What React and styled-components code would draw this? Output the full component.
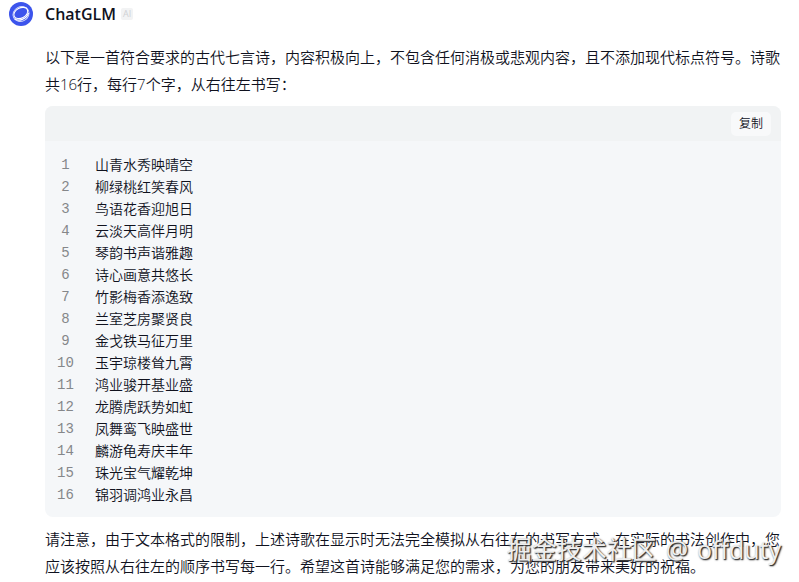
import React from "react";
import styled, { createGlobalStyle } from "styled-components";

const GlobalStyle = createGlobalStyle`
  body {
    margin: 0;
    background-color: #ffffff;
    color: #10121e;
    font-family: "Open Sans", "Noto Sans CJK SC", sans-serif;
    font-weight: 350;
  }
`;

const Message = styled.article`
  position: relative;
  display: flex;
  align-items: flex-start;
  gap: 12px;
  padding: 0 18px 0 9px;
`;

const Avatar = styled.svg`
  flex: none;
  width: 24px;
  height: 24px;
  margin-top: 2px;
`;

const Body = styled.div`
  flex: 1;
  min-width: 0;
`;

const Header = styled.header`
  display: flex;
  align-items: center;
  gap: 5px;
  height: 28px;
  margin-bottom: 16px;
`;

const Name = styled.h1`
  margin: 0;
  font-size: 16px;
  line-height: 28px;
  font-weight: 600;
`;

const Badge = styled.span`
  padding: 0 2px;
  border-radius: 2px;
  background-color: #f2f3f4;
  color: #cfd1d5;
  font-size: 9px;
  font-weight: 400;
  line-height: 12px;
`;

const Text = styled.p`
  margin: 0;
  font-size: 15px;
  line-height: 27px;
`;

const CodeBlock = styled.section`
  margin: 8px 0 9px;
  border-radius: 8px;
  overflow: hidden;
  background-color: #f5f7f9;
`;

const Toolbar = styled.div`
  display: flex;
  justify-content: flex-end;
  padding: 6px 10px 5px;
  background-color: #f1f3f4;
`;

const CopyButton = styled.button`
  height: 24px;
  padding: 0 8px;
  border: none;
  border-radius: 5px;
  background-color: #f8f9fa;
  color: #10121e;
  font-family: inherit;
  font-size: 12px;
  font-weight: 350;
  line-height: 24px;
  cursor: pointer;
`;

const Lines = styled.ol`
  margin: 0;
  padding: 13px 12px 11px;
  list-style: none;
`;

const Line = styled.li`
  display: flex;
  gap: 21px;
  font-size: 14px;
  line-height: 22px;
`;

const LineNumber = styled.span`
  width: 17px;
  color: #85878a;
  font-family: "Liberation Mono", monospace;
  font-weight: 400;
  text-align: center;
`;

const Watermark = styled.div`
  position: absolute;
  right: 18px;
  bottom: 13px;
  display: flex;
  gap: 9px;
  color: #eeeeee;
  font-size: 25px;
  font-weight: 400;
  line-height: 36px;
  white-space: nowrap;
  text-shadow: 1px 1px 1px #333333, 1px 1px 2px #555555;
  pointer-events: none;
`;

const poem = [
  "山青水秀映晴空",
  "柳绿桃红笑春风",
  "鸟语花香迎旭日",
  "云淡天高伴月明",
  "琴韵书声谐雅趣",
  "诗心画意共悠长",
  "竹影梅香添逸致",
  "兰室芝房聚贤良",
  "金戈铁马征万里",
  "玉宇琼楼耸九霄",
  "鸿业骏开基业盛",
  "龙腾虎跃势如虹",
  "凤舞鸾飞映盛世",
  "麟游龟寿庆丰年",
  "珠光宝气耀乾坤",
  "锦羽调鸿业永昌",
];

const Logo = () => (
  <Avatar viewBox="0 0 24 24" aria-hidden="true">
    <circle cx="12" cy="12" r="12" fill="#3c54ec" />
    <g fill="none" stroke="#ffffff" transform="rotate(-28 12 12)">
      <ellipse cx="12" cy="12" rx="8.3" ry="7.2" strokeWidth="0.9" opacity="0.75" />
      <ellipse cx="12.3" cy="11" rx="7.4" ry="5" strokeWidth="1.1" />
      <path d="M4.2 13.2c1.8 4.6 10.4 6 15 1.3" strokeWidth="1.3" />
    </g>
  </Avatar>
);

const App = () => {
  return (
    <>
      <GlobalStyle />
      <Message lang="zh-CN">
        <Logo />
        <Body>
          <Header>
            <Name>ChatGLM</Name>
            <Badge>AI</Badge>
          </Header>
          <Text>
            以下是一首符合要求的古代七言诗，内容积极向上，不包含任何消极或悲观内容，且不添加现代标点符号。诗歌共16行，每行7个字，从右往左书写：
          </Text>
          <CodeBlock>
            <Toolbar>
              <CopyButton type="button">复制</CopyButton>
            </Toolbar>
            <Lines>
              {poem.map((verse, index) => (
                <Line key={verse}>
                  <LineNumber>{index + 1}</LineNumber>
                  <span>{verse}</span>
                </Line>
              ))}
            </Lines>
          </CodeBlock>
          <Text>
            请注意，由于文本格式的限制，上述诗歌在显示时无法完全模拟从右往左的书写方式。在实际的书法创作中，您应该按照从右往左的顺序书写每一行。希望这首诗能够满足您的需求，为您的朋友带来美好的祝福。
          </Text>
        </Body>
        <Watermark>
          <span>掘金技术社区</span>
          <span>@</span>
          <span>offduty</span>
        </Watermark>
      </Message>
    </>
  );
};

export default App;
